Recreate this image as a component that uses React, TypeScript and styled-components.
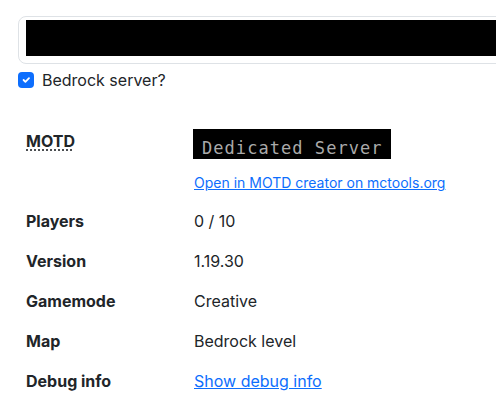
import styled, { createGlobalStyle } from "styled-components";

const GlobalStyle = createGlobalStyle`
  html, body {
    margin: 0;
    padding: 0;
    background: #fff;
    overflow: hidden;
  }
  body {
    font-family: Inter, "Liberation Sans", sans-serif;
    font-size: 16px;
    line-height: 1.5;
    color: #212529;
  }
`;

interface Row {
  label: string;
  value: string;
  link?: boolean;
}

const rows: Row[] = [
  { label: "Players", value: "0 / 10" },
  { label: "Version", value: "1.19.30" },
  { label: "Gamemode", value: "Creative" },
  { label: "Map", value: "Bedrock level" },
  { label: "Debug info", value: "Show debug info", link: true },
];

const App = () => {
  return (
    <Page>
      <GlobalStyle />
      <AddressInput>
        <Redacted />
      </AddressInput>

      <CheckRow>
        <CheckBox>
          <svg width="12" height="12" viewBox="0 0 20 20">
            <path
              d="M6 10l3 3 6-6"
              fill="none"
              stroke="#fff"
              strokeWidth="3"
              strokeLinecap="round"
              strokeLinejoin="round"
            />
          </svg>
        </CheckBox>
        <CheckLabel>Bedrock server?</CheckLabel>
      </CheckRow>

      <InfoTable>
        <tbody>
          <tr>
            <LabelCell>
              <Abbr title="Message of the day">MOTD</Abbr>
            </LabelCell>
            <ValueCell>
              <MotdBox>Dedicated Server</MotdBox>
              <SmallLink href="#">Open in MOTD creator on mctools.org</SmallLink>
            </ValueCell>
          </tr>
          {rows.map((row) => (
            <tr key={row.label}>
              <LabelCell>{row.label}</LabelCell>
              <ValueCell>
                {row.link ? <Link href="#">{row.value}</Link> : row.value}
              </ValueCell>
            </tr>
          ))}
        </tbody>
      </InfoTable>
    </Page>
  );
};

export default App;

const Page = styled.div`
  padding: 16px 0 0 18px;
  overflow: hidden;
`;

const AddressInput = styled.div`
  width: 560px;
  height: 48px;
  box-sizing: border-box;
  border: 1px solid #dee2e6;
  border-radius: 8px;
  padding: 3px 0 0 7px;
`;

const Redacted = styled.div`
  height: 36px;
  background: #000;
`;

const CheckRow = styled.label`
  display: flex;
  align-items: center;
  gap: 8px;
  height: 24px;
  margin-top: 4px;
`;

const CheckBox = styled.span`
  width: 16px;
  height: 16px;
  box-sizing: border-box;
  border-radius: 4px;
  background: #0d6efd;
  display: flex;
  align-items: center;
  justify-content: center;
`;

const CheckLabel = styled.span`
  font-size: 16px;
`;

const InfoTable = styled.table`
  margin-top: 29px;
  border-collapse: collapse;
`;

const LabelCell = styled.td`
  width: 152px;
  padding: 8px;
  font-weight: 700;
  vertical-align: top;
  line-height: 24px;
`;

const ValueCell = styled.td`
  padding: 8px;
  vertical-align: top;
  line-height: 24px;
`;

const Abbr = styled.abbr`
  text-decoration: underline dotted;
  text-underline-offset: 3px;
  cursor: help;
`;

const MotdBox = styled.div`
  display: inline-block;
  box-sizing: border-box;
  background: #000;
  color: #aaaaaa;
  font-family: "DejaVu Sans Mono", "Liberation Mono", monospace;
  font-size: 17px;
  letter-spacing: 1.05px;
  line-height: 22px;
  height: 30px;
  padding: 8px 8px 0 9px;
  margin: 0 0 13px -1px;
  vertical-align: top;
`;

const SmallLink = styled.a`
  display: block;
  font-size: 14px;
  line-height: 21px;
  color: #0d6efd;
`;

const Link = styled.a`
  color: #0d6efd;
`;
